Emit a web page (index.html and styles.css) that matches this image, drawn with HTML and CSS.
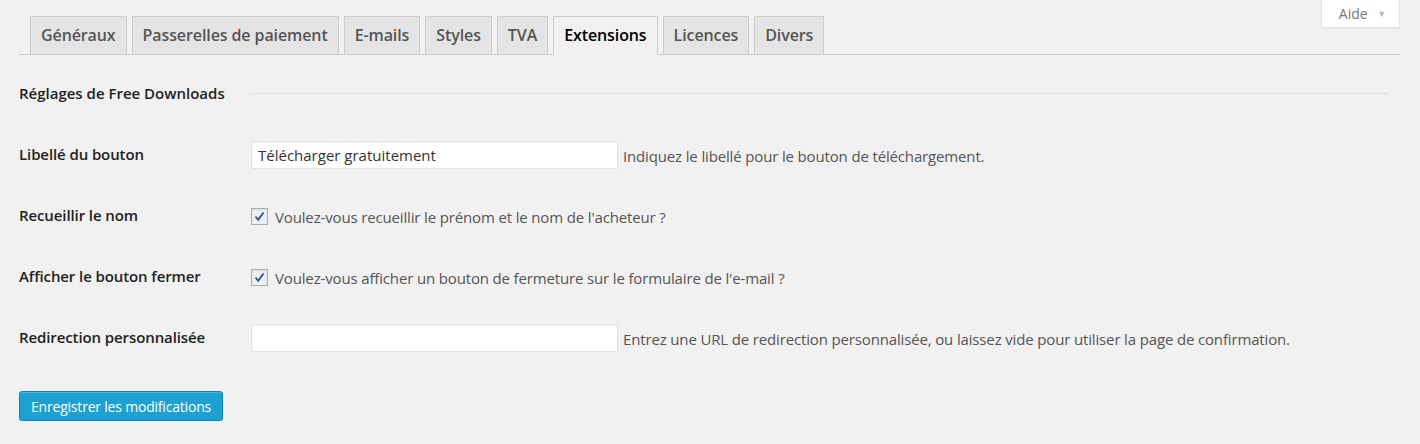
FILE: index.html
```html
<!DOCTYPE html>
<html lang="fr">
<head>
    <meta charset="UTF-8">
    <title>Réglages - Extensions</title>
    <link rel="stylesheet" href="styles.css">
</head>
<body>
    <div class="wrap">
        <div class="help-tab">
            <button class="help-button">Aide <span class="help-arrow">&#9660;</span></button>
        </div>

        <h2 class="nav-tab-wrapper">
            <a class="nav-tab" href="#">Généraux</a>
            <a class="nav-tab" href="#">Passerelles de paiement</a>
            <a class="nav-tab" href="#">E-mails</a>
            <a class="nav-tab" href="#">Styles</a>
            <a class="nav-tab" href="#">TVA</a>
            <a class="nav-tab nav-tab-active" href="#">Extensions</a>
            <a class="nav-tab" href="#">Licences</a>
            <a class="nav-tab" href="#">Divers</a>
        </h2>

        <form class="settings-form">
            <div class="section-header">
                <strong>Réglages de Free Downloads</strong>
                <hr>
            </div>

            <div class="form-row">
                <label class="row-label">Libellé du bouton</label>
                <div class="row-field">
                    <input class="regular-text" type="text" value="Télécharger gratuitement">
                    <span class="description">Indiquez le libellé pour le bouton de téléchargement.</span>
                </div>
            </div>

            <div class="form-row">
                <label class="row-label">Recueillir le nom</label>
                <div class="row-field">
                    <span class="check">
                        <svg width="11" height="11" viewBox="0 0 11 11"><path d="M1.5 5.5 L4.2 8.8 L9.5 1.5" fill="none" stroke="#2b4f8f" stroke-width="1.8"/></svg>
                    </span>
                    <span class="description">Voulez-vous recueillir le prénom et le nom de l'acheteur ?</span>
                </div>
            </div>

            <div class="form-row">
                <label class="row-label">Afficher le bouton fermer</label>
                <div class="row-field">
                    <span class="check">
                        <svg width="11" height="11" viewBox="0 0 11 11"><path d="M1.5 5.5 L4.2 8.8 L9.5 1.5" fill="none" stroke="#2b4f8f" stroke-width="1.8"/></svg>
                    </span>
                    <span class="description">Voulez-vous afficher un bouton de fermeture sur le formulaire de l'e-mail ?</span>
                </div>
            </div>

            <div class="form-row">
                <label class="row-label">Redirection personnalisée</label>
                <div class="row-field">
                    <input class="regular-text" type="text" value="">
                    <span class="description">Entrez une URL de redirection personnalisée, ou laissez vide pour utiliser la page de confirmation.</span>
                </div>
            </div>

            <div class="submit">
                <button type="button" class="button-primary">Enregistrer les modifications</button>
            </div>
        </form>
    </div>
</body>
</html>
```

FILE: styles.css
```css
* {
    margin: 0;
    padding: 0;
    box-sizing: border-box;
}

body {
    font-family: "Open Sans", "Noto Sans", sans-serif;
    background: #f1f1f1;
    color: #222;
    font-size: 15px;
}

.wrap {
    position: relative;
    padding: 16px 20px 0 19px;
}

/* Help toggle in the top right corner */
.help-tab {
    position: absolute;
    top: 0;
    right: 20px;
}

.help-button {
    font-family: inherit;
    font-size: 14px;
    color: #777;
    background: #fff;
    border: 1px solid #e5e5e5;
    border-top: none;
    width: 79px;
    height: 28px;
    padding-left: 4px;
    box-shadow: 0 1px 1px rgba(0, 0, 0, 0.04);
}

.help-arrow {
    font-size: 9px;
    color: #bbb;
    margin-left: 6px;
    vertical-align: 2px;
}

/* Tabs */
.nav-tab-wrapper {
    display: flex;
    gap: 5px;
    padding-left: 11px;
    border-bottom: 1px solid #ccc;
}

.nav-tab {
    display: block;
    font-size: 16px;
    font-weight: 600;
    letter-spacing: -0.1px;
    line-height: 24px;
    padding: 6px 10px 7px;
    margin-bottom: -1px;
    color: #555;
    text-decoration: none;
    background: #e4e4e4;
    border: 1px solid #ccc;
}

.nav-tab-active {
    color: #000;
    background: #f1f1f1;
    border-bottom-color: #f1f1f1;
}

/* Settings form */
.settings-form {
    padding-top: 27px;
}

.section-header {
    display: flex;
    align-items: center;
    height: 22px;
    margin-bottom: 37px;
}

.section-header strong {
    font-size: 15px;
    font-weight: 600;
    width: 231px;
    flex: none;
}

.section-header hr {
    flex: 1;
    border: none;
    border-top: 1px solid #ddd;
    margin-right: 12px;
}

.form-row {
    display: flex;
    align-items: center;
    height: 28px;
    margin-bottom: 33px;
}

.row-label {
    width: 232px;
    flex: none;
    font-weight: 600;
    font-size: 15px;
    letter-spacing: -0.1px;
    margin-top: -2px;
}

.row-field {
    display: flex;
    align-items: center;
}

.regular-text {
    width: 367px;
    height: 28px;
    font-family: inherit;
    font-size: 15px;
    color: #333;
    padding: 0 6px;
    background: #fff;
    border: 1px solid #e3e3e3;
    box-shadow: inset 0 1px 2px rgba(0, 0, 0, 0.05);
    margin-right: 5px;
}

.description {
    font-size: 15px;
    color: #555;
    letter-spacing: -0.15px;
    margin-top: 2px;
}

.check {
    width: 17px;
    height: 17px;
    border: 1px solid #a9aeb5;
    background: #eceff5;
    box-shadow: inset 0 1px 2px rgba(0, 0, 0, 0.1);
    display: flex;
    align-items: center;
    justify-content: center;
    margin-right: 7px;
}

.submit {
    padding-top: 6px;
}

.button-primary {
    font-family: inherit;
    font-size: 14px;
    letter-spacing: -0.2px;
    color: #fff;
    background: #1da0d2;
    border: 1px solid #0a86b4;
    border-radius: 3px;
    height: 30px;
    width: 204px;
    padding: 0;
    box-shadow: inset 0 1px 0 rgba(120, 200, 230, 0.5);
}
```
